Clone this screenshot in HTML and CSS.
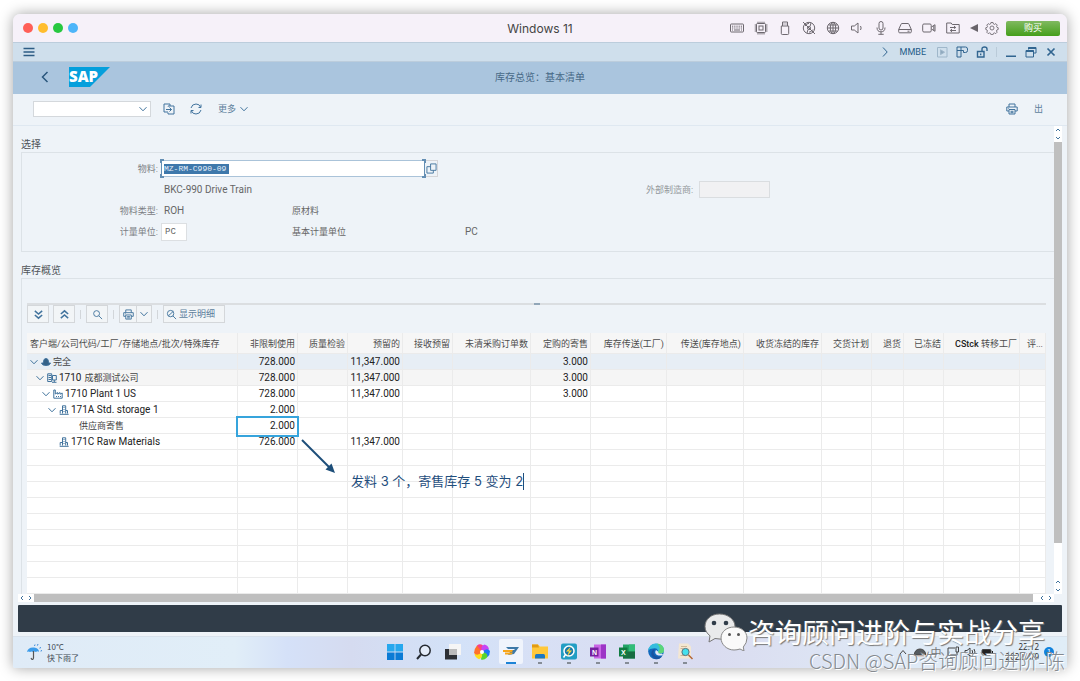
FILE: index.html
```html
<!DOCTYPE html>
<html lang="zh-CN">
<head>
<meta charset="utf-8">
<title>Windows 11</title>
<link rel="stylesheet" href="styles.css">
</head>
<body>
<svg class="defs" aria-hidden="true">
  <symbol id="chev" viewBox="0 0 8 8"><path d="M.5 2.200 4 5.800 7.500 2.200"/></symbol>
  <symbol id="company" viewBox="0 0 10 10"><path d="M.7 8.500V.8h4v7.700zM1.500 2.500h2.500M1.500 4.500h2.500M1.500 6.500h2.500M5.500 2.500h3.800v4.500h-3.800zM5 9.300h4.500M7.300 7v2"/></symbol>
  <symbol id="plant" viewBox="0 0 10 10"><path d="M.8 9.200V1h1.500v4l2.400-1.500v1.700l2.300-1.700v1.700l2.200-1.200v5.200zM3.500 7v1M5.500 7v1M7.500 7v1"/></symbol>
  <symbol id="store" viewBox="0 0 10 10"><path d="M3.500 8.500V.8h3.200v7.700M.7 9.300h9M1.200 8.500v-3h2M7 5.500h1.500v3M4.500 2.500h1M4.500 4.500h1M4.500 6.500h1"/></symbol>
  <symbol id="printer" viewBox="0 0 12 12"><path d="M3 4V1h6v3M3 8H.8V4h10.400v4H9M3 6.500h6V11H3zM4.500 8.300h3M4.500 9.700h3M2.300 5.300h.8"/></symbol>
</svg>
<div class="window">
  <header class="titlebar">
    <div class="dots"><i class="red"></i><i class="amber"></i><i class="green"></i><i class="blue"></i></div>
    <h1>Windows 11</h1>
    <div class="devices">
      <svg viewBox="0 0 16 16"><rect x="1.500" y="4" width="13" height="8" rx=".7"/><path d="M3 6.200h10M3 8h10" stroke-dasharray="1 .8"/><path d="M3 10h1M5 10h6M12 10h1"/></svg>
      <svg viewBox="0 0 16 16"><rect x="3.500" y="3.500" width="9" height="9" rx="1"/><rect x="6" y="6" width="4" height="4"/><path d="M5 1.700v2M7 1.700v2M9 1.700v2M11 1.700v2M5 12.500v2M7 12.500v2M9 12.500v2M11 12.500v2M1.700 5h2M1.700 7h2M1.700 9h2M1.700 11h2M12.500 5h2M12.500 7h2M12.500 9h2M12.500 11h2"/></svg>
      <svg viewBox="0 0 16 16"><path d="M5.500 6V2h5v4M4.300 6h7.400v7.500q0 1-1 1H5.300q-1 0-1-1zM7 3.500v1M9 3.500v1"/></svg>
      <svg viewBox="0 0 16 16"><circle cx="8" cy="8" r="5.700"/><circle cx="8" cy="8" r="1.500"/><path d="M2 2l12 12M4 6q1.500-2.500 4-2.700M12 9.500q-1.500 2.500-4 2.700M10 3l-1 3.500M6 13l1-3.500"/></svg>
      <svg viewBox="0 0 16 16"><circle cx="8" cy="8" r="5.700"/><ellipse cx="8" cy="8" rx="2.700" ry="5.700"/><path d="M2.300 8h11.400M3.500 5h9M3.500 11h9M8 2.300v11.400"/></svg>
      <svg viewBox="0 0 16 16"><path d="M2.500 6h2.800L9 3v10L5.300 10H2.500zM11.500 6q1.300 2 0 4"/></svg>
      <svg viewBox="0 0 16 16"><rect x="6" y="1.500" width="4" height="8.500" rx="2"/><path d="M4 7.500q0 4.300 4 4.300t4-4.300M8 12v2.300M5.300 14.300h5.400"/></svg>
      <svg viewBox="0 0 16 16"><path d="M1.700 9.500 4 4.300q.3-.8 1-.8h6q.7 0 1 .8l2.300 5.200v2.300q0 1-1 1H2.700q-1 0-1-1zM1.700 9.500h12.600M10.500 11.200h2"/></svg>
      <svg viewBox="0 0 16 16"><rect x="1.700" y="4" width="8.500" height="8" rx="1.200"/><path d="M10.500 7 14 4.700v6.600L10.500 9M12.800 5.500v5"/></svg>
      <svg viewBox="0 0 16 16"><path d="M1.700 13V3h4.500l1 1.500h7V13zM5 7.500h5.500M9 6l1.700 1.500L9 8.500M11 10.500H5.500M7 9l-1.700 1.500L7 12"/></svg>
    </div>
    <svg class="back-tri" viewBox="0 0 8 8"><path d="M8 0v8L0 4z"/></svg>
    <svg class="gear" viewBox="0 0 16 16"><circle cx="8" cy="8" r="2.300"/><path d="M6.800 1.700h2.400l.4 1.600 1.300.6 1.500-.9 1.600 1.700-.8 1.400.5 1.200 1.400.4v2l-1.500.5-.5 1.200.8 1.400-1.600 1.600-1.400-.8-1.300.5-.4 1.500H6.800l-.4-1.500-1.300-.5-1.500.8L2 12.800l.8-1.400-.5-1.200-1.400-.5v-2l1.500-.4.5-1.200L2 4.700 3.700 3l1.400.9 1.300-.6z"/></svg>
    <button class="buy">购买</button>
  </header>

  <nav class="menubar">
    <button class="bare" aria-label="菜单"><svg class="burger" viewBox="0 0 12 10"><path d="M.5 1.500h11M.5 5h11M.5 8.500h11"/></svg></button>
    <div class="menu-tools">
      <svg viewBox="0 0 12 12"><path d="M4 1.500 8.200 6 4 10.500"/></svg>
      <span class="tcode">MMBE</span>
      <svg class="dim" viewBox="0 0 12 12"><path d="M1.500 1.500h9.500v9.500H1.500z"/><path d="M4.500 3.800v4.800L8.500 6.200z" fill="#8fa9be"/></svg>
      <svg viewBox="0 0 12 12"><path d="M1 1h8.500q2 0 2 2v1.500q0 2-2 2H7.500v-2H5v6.500H1zM1 4.500h4V1"/></svg>
      <svg viewBox="0 0 12 12"><path d="M1.500 5.500h6.500v5.500H1.500zM6 5V3q0-2 2.500-2T11 3v2M4.700 7.500v1.700" stroke-width="1.400"/></svg>
      <span class="sep"></span>
      <svg viewBox="0 0 12 12"><path d="M1 10.300h10" stroke-width="1.500"/></svg>
      <svg viewBox="0 0 12 12"><path d="M3.500 3.500V1.500h7.500v5.500H9M1 4.500h7.500V11H1z"/><path d="M1 5h7.500M3.500 2h7.500" stroke-width="2"/></svg>
      <svg viewBox="0 0 12 12"><path d="m2.500 2.500 7 7m0-7-7 7" stroke-width="1.700"/></svg>
    </div>
  </nav>

  <div class="banner">
    <button class="bare" aria-label="返回"><svg class="back" viewBox="0 0 8 12"><path d="M6.500 1 1.500 6l5 5"/></svg></button>
    <svg class="logo" viewBox="0 0 41 20"><path d="M0 0h41L21 20H0z"/><text x="0" y="15">SAP</text></svg>
    <h2>库存总览：基本清单</h2>
  </div>

  <div class="toolbar">
    <div class="combo"><select aria-label="命令"><option></option></select><svg viewBox="0 0 8 8"><use href="#chev"/></svg></div>
    <button class="bare" aria-label="转到"><svg viewBox="0 0 12 12"><path d="M5 9H1V1h6v2M5 3.500V3h6v8H5V9.500M3 6.500h5.500M6.500 4.500l2 2-2 2"/></svg></button>
    <button class="bare refresh" aria-label="刷新"><svg viewBox="0 0 12 12"><path d="M1 5q1-4 5-4 3.500 0 4.500 3M11 7q-1 4-5 4-3.500 0-4.500-3M11 1.500v3H8.500M1 10.500v-3h2.500"/></svg></button>
    <button class="bare more">更多 <svg viewBox="0 0 8 8"><use href="#chev"/></svg></button>
    <button class="bare print" aria-label="打印"><svg viewBox="0 0 12 12"><use href="#printer"/></svg></button>
    <button class="bare exit">出</button>
  </div>

  <div class="workspace">
    <main>
      <h3>选择</h3>
      <form class="criteria">
        <label class="lab" for="mat">物料:</label>
        <div class="material"><div class="focus"><input id="mat" value="MZ-RM-C990-09"></div><button type="button" aria-label="搜索帮助"><svg viewBox="0 0 12 12"><path d="M5 1h6v7H5zM5 4H1v7h7V8"/></svg></button></div>
        <span class="c2 wide latin">BKC-990 Drive Train</span>
        <label class="faint" for="ext">外部制造商:</label><input id="ext" class="ext" disabled>
        <span class="lab">物料类型:</span><span class="c2 latin">ROH</span><span class="c3">原材料</span>
        <label class="lab" for="unit">计量单位:</label><input id="unit" class="unit" value="PC"><span class="c3">基本计量单位</span><span class="c4 latin">PC</span>
      </form>
      <h3>库存概览</h3>
      <section class="overview">
        <div class="splitter"></div>
        <div class="gridtools">
          <button aria-label="展开"><svg class="heavy" viewBox="0 0 12 12"><path d="m2 2 4 3.500L10 2M2 6.500 6 10l4-3.500"/></svg></button>
          <button aria-label="折叠"><svg class="heavy" viewBox="0 0 12 12"><path d="m2 5.500 4-3.500 4 3.500M2 10l4-3.500 4 3.500"/></svg></button>
          <i></i>
          <button aria-label="查找"><svg viewBox="0 0 12 12"><circle cx="5" cy="5" r="3.200"/><path d="m7.500 7.500 3.500 3.500"/></svg></button>
          <i></i>
          <span class="split"><button aria-label="打印"><svg viewBox="0 0 12 12"><use href="#printer"/></svg></button><button aria-label="打印选项"><svg class="tiny" viewBox="0 0 8 8"><use href="#chev"/></svg></button></span>
          <i></i>
          <button class="detail"><svg viewBox="0 0 12 12"><circle cx="5" cy="5" r="3.500"/><path d="m7.500 7.500 3.500 3.500M2.500 7.500 8 2.500"/></svg>显示明细</button>
        </div>
        <table>
          <colgroup><col><col class="w60"><col class="w50"><col class="w55"><col class="w50"><col class="w78"><col class="w60"><col class="w76"><col class="w77"><col class="w78"><col class="w50"><col class="w32"><col class="w40"><col class="w76"><col class="w26"></colgroup>
          <thead><tr><th>客户端/公司代码/工厂/存储地点/批次/特殊库存</th><th>非限制使用</th><th>质量检验</th><th>预留的</th><th>接收预留</th><th>未清采购订单数</th><th>定购的寄售</th><th>库存传送(工厂)</th><th>传送(库存地点)</th><th>收货冻结的库存</th><th>交货计划</th><th>退货</th><th>已冻结</th><th><b>CStck</b> 转移工厂</th><th>评...</th></tr></thead>
          <tbody>
            <tr class="total"><td><div class="node"><svg><use href="#chev"/></svg><svg class="ic" viewBox="0 0 10 10"><path d="M2.500 5q0-3.500 2.500-3.500T7.500 5v1h2Q9 8.500 5 8.500T.5 6h2z" fill="#346187"/></svg><span class="zh">完全</span></div></td><td>728.000</td><td></td><td>11,347.000</td><td></td><td></td><td>3.000</td><td></td><td></td><td></td><td></td><td></td><td></td><td></td><td></td></tr>
            <tr class="sub"><td><div class="node l1"><svg><use href="#chev"/></svg><svg class="ic"><use href="#company"/></svg>1710 <span class="zh gap">成都测试公司</span></div></td><td>728.000</td><td></td><td>11,347.000</td><td></td><td></td><td>3.000</td><td></td><td></td><td></td><td></td><td></td><td></td><td></td><td></td></tr>
            <tr><td><div class="node l2"><svg><use href="#chev"/></svg><svg class="ic"><use href="#plant"/></svg>1710 Plant 1 US</div></td><td>728.000</td><td></td><td>11,347.000</td><td></td><td></td><td>3.000</td><td></td><td></td><td></td><td></td><td></td><td></td><td></td><td></td></tr>
            <tr><td><div class="node l3"><svg><use href="#chev"/></svg><svg class="ic"><use href="#store"/></svg>171A Std. storage 1</div></td><td>2.000</td><td></td><td></td><td></td><td></td><td></td><td></td><td></td><td></td><td></td><td></td><td></td><td></td><td></td></tr>
            <tr><td><div class="node leaf"><span class="zh">供应商寄售</span></div></td><td class="marked">2.000<svg class="arrow" viewBox="0 0 38 38"><path d="M2 2 29 29" stroke="#1d4e79" stroke-width="2"/><path d="M35 35 25.500 31.500 31.500 25.500z" fill="#1d4e79"/></svg><span class="note">发料 3 个，寄售库存 5 变为 2</span></td><td></td><td></td><td></td><td></td><td></td><td></td><td></td><td></td><td></td><td></td><td></td><td></td><td></td></tr>
            <tr><td><div class="node l3"><svg></svg><svg class="ic"><use href="#store"/></svg>171C Raw Materials</div></td><td>726.000</td><td></td><td>11,347.000</td><td></td><td></td><td></td><td></td><td></td><td></td><td></td><td></td><td></td><td></td><td></td></tr>
            <tr><td></td><td></td><td></td><td></td><td></td><td></td><td></td><td></td><td></td><td></td><td></td><td></td><td></td><td></td><td></td></tr>
            <tr><td></td><td></td><td></td><td></td><td></td><td></td><td></td><td></td><td></td><td></td><td></td><td></td><td></td><td></td><td></td></tr>
            <tr><td></td><td></td><td></td><td></td><td></td><td></td><td></td><td></td><td></td><td></td><td></td><td></td><td></td><td></td><td></td></tr>
            <tr><td></td><td></td><td></td><td></td><td></td><td></td><td></td><td></td><td></td><td></td><td></td><td></td><td></td><td></td><td></td></tr>
            <tr><td></td><td></td><td></td><td></td><td></td><td></td><td></td><td></td><td></td><td></td><td></td><td></td><td></td><td></td><td></td></tr>
            <tr><td></td><td></td><td></td><td></td><td></td><td></td><td></td><td></td><td></td><td></td><td></td><td></td><td></td><td></td><td></td></tr>
            <tr><td></td><td></td><td></td><td></td><td></td><td></td><td></td><td></td><td></td><td></td><td></td><td></td><td></td><td></td><td></td></tr>
            <tr><td></td><td></td><td></td><td></td><td></td><td></td><td></td><td></td><td></td><td></td><td></td><td></td><td></td><td></td><td></td></tr>
            <tr><td></td><td></td><td></td><td></td><td></td><td></td><td></td><td></td><td></td><td></td><td></td><td></td><td></td><td></td><td></td></tr>
          </tbody>
        </table>
      </section>
      <div class="hbar"><svg viewBox="0 0 16 8"><path d="M5 2 3 4l2 2M11 2l2 2-2 2"/></svg><div class="thumb"></div><svg viewBox="0 0 16 8"><path d="M5 2 3 4l2 2M11 2l2 2-2 2"/></svg></div>
    </main>
    <div class="vbar"><svg viewBox="0 0 8 16"><path d="m2 5 2-2 2 2M2 11l2 2 2-2"/></svg><div class="thumb"></div><svg viewBox="0 0 8 16"><path d="m2 5 2-2 2 2M2 11l2 2 2-2"/></svg></div>
  </div>
  <div class="status"></div>

  <footer class="taskbar">
    <div class="weather">
      <svg viewBox="0 0 16 18"><path d="M1 9Q2 4 8 4.500q5 .5 5 4.500-1.500-1.300-3 0-1.500-1-3 0-1.500-1-3 0-1.500-1-3 0z" fill="#3c9cea"/><path d="M7.500 8v7q-.3 1.700-1.800 1.200L5 15" fill="none" stroke="#555" stroke-width="1.200"/><path d="M9 1.500 8.500 3M12 1l-.6 1.600M14.500 4l-.6 1.600M15.500 7l-.5 1.500" stroke="#3b89d8"/></svg>
      <div><p>10°C</p><p>快下雨了</p></div>
    </div>
    <div class="apps">
      <svg viewBox="0 0 16 16"><path d="M0 0h7.600v7.600H0zM8.400 0H16v7.600H8.400z" fill="#27a8ee"/><path d="M0 8.400h7.600V16H0zM8.400 8.400H16V16H8.400z" fill="#0b7bd5"/></svg>
      <svg viewBox="0 0 16 16"><circle cx="9" cy="6.500" r="5.200" fill="#e4ecf9" stroke="#252a31" stroke-width="1.500"/><path d="m5 10.500-4 4.500" stroke="#252a31" stroke-width="2"/></svg>
      <svg viewBox="0 0 16 16"><path d="M4 0h12v11H4z" fill="#f5f5f5"/><path d="M0 5h12v10.500H0z" fill="#2d3035"/><path d="M4 5h8v6H4z" fill="#bbb"/></svg>
      <svg viewBox="0 0 16 16"><path d="M8 8Q2 7 3 1.500 6-1 9 1.500z" fill="#fa3e89"/><path d="M8 8Q6 2 10.500.5q4 1 4.500 5z" fill="#c644f5"/><path d="M8 8q5-5 8-1 0 4-2.500 6z" fill="#1d78f4"/><path d="M8 8q7 1 5 5.500Q10 16.500 7 15.500z" fill="#58d52d"/><path d="M8 8q1 6-3 7.200Q1 13.500.5 10z" fill="#ffdf1a"/><path d="M8 8q-5 5-8 1 0-4 3-7.500z" fill="#ff722c"/><circle cx="8" cy="8" r="2" fill="#fff"/></svg>
      <div class="active"><svg viewBox="0 0 16 16"><path d="M3 4h13l-5 7-6 1 2-3H2l1-2h8l1-1H5z" fill="#3e79a8"/><path d="M0 7h10l-1 2H0zM2 9.500h8L8.500 11.500H2z" fill="#f7a51a"/></svg></div>
      <svg class="run" viewBox="0 0 16 16"><path d="M0 1h6l2 2h8v12H0z" fill="#ffc83a"/><path d="M0 1h6l1 3H0z" fill="#e29b14"/><path d="M3 15v-3q0-1.500 1.500-1.500h7Q13 10.500 13 12v3z" fill="#1b78c4"/></svg>
      <svg class="run" viewBox="0 0 16 16"><rect width="16" height="16" rx="2" fill="#239ec4"/><circle cx="8" cy="7.500" r="5" fill="#197bab" stroke="#fff" stroke-width="1.500"/><path d="m10 3-5 5h3l-2 5 5-6H8z" fill="#ffd53b"/><path d="m4.500 11-2 3" stroke="#fff" stroke-width="1.500"/></svg>
      <svg class="run" viewBox="0 0 16 16"><path d="M4 1h12v14H4z" fill="#c965e5"/><path d="M11 1h5v14h-5z" fill="#9c35c6"/><path d="M0 4h8.500v9H0z" fill="#7620a0"/><text x="2" y="11">N</text></svg>
      <svg class="run" viewBox="0 0 16 16"><path d="M4 1h12v14H4z" fill="#23a366"/><path d="M10 1h6v7h-6z" fill="#32bd78"/><path d="M4 8h12v7H4z" fill="#176c42"/><path d="M0 4h8.500v9H0z" fill="#107c41"/><text x="2" y="11">X</text></svg>
      <svg class="run" viewBox="0 0 16 16"><circle cx="8" cy="8" r="7.800" fill="#1269bd"/><path d="M0 7Q2-1 9 0q7 1 7 7 0 3-4 3-3 0-2-3-1-3-5-2-3 0-5 2z" fill="#35bddd"/><path d="M9 0q7 1 7 7 0 3-4 3-2 0-2-1.500Q14 5 9 0z" fill="#5cd678"/><path d="M7 6q-3 3 0 6 3 2 7 1-3 4-8 2Q1 11 5 6z" fill="#1853a0"/><path d="M8 6.500q-2 3 1 5 3 1 6 0l-1-1.500q-4 1-4-2z" fill="#e1eaf8"/></svg>
      <svg class="run" viewBox="0 0 16 16"><path d="M2 0h9l3 3v12H1z" fill="#f4e7d2"/><path d="M4 3h6M3.500 5h3M3.500 12h5" stroke="#cfb999"/><circle cx="8.500" cy="8.500" r="3.600" fill="#45e0ed" stroke="#59717a"/><path d="m11.500 11.500 4 4" stroke="#b26432" stroke-width="1.500"/></svg>
    </div>
    <div class="tray">
      <svg viewBox="0 0 12 12"><path d="m3 8 3-3.500L9 8"/></svg>
      <svg viewBox="0 0 12 12"><path d="M0 9q1-6 6-6t6 6z" fill="#555b60"/><path d="M2 10h8" stroke="#d8b8a8"/></svg>
      <span class="ime">中</span>
      <svg viewBox="0 0 12 12"><path d="M8 2H1v7h8M3 11h5M9 1h2.500v5H9zM10 6v3"/></svg>
      <svg viewBox="0 0 12 12"><path d="M1 4.500h2L6 2v8L3 7.500H1zM8 4q1.300 2 0 4M10 3q2 3 0 6"/></svg>
      <svg viewBox="0 0 12 12"><rect x="1" y="3.500" width="9" height="5.500" rx="1" fill="#222"/><path d="M11.500 5v2.500" stroke="#222"/></svg>
      <div class="clock"><p>22:12</p><p>2022/4/9</p></div>
      <span class="badge">1</span>
    </div>
  </footer>
</div>
<div class="mark-wechat">
  <svg viewBox="0 0 44 38"><path d="M15.500 1C7 1 1 6.500 1 13.500c0 4 2 7 5 9.300L5 29l6-3.500q6 1.500 11-.5 9-3 9-11.500C31 6.500 24 1 15.500 1z" fill="#e9eaeb" stroke="#777"/><circle cx="10" cy="10" r="2.300" fill="#303c49"/><circle cx="22" cy="10" r="2.300" fill="#303c49"/><path d="M30 14c-7 0-13 4.500-13 11s6 12 13 12q3 0 6-1l4 2-.7-4Q43 30 43 25c0-6.500-6-11-13-11z" fill="#fafafa" stroke="#888"/><circle cx="25.500" cy="21.500" r="1.500" fill="#555"/><circle cx="34.500" cy="21.500" r="1.500" fill="#555"/></svg>
  <span>咨询顾问进阶与实战分享</span>
</div>
<div class="mark-csdn">CSDN @SAP咨询顾问进阶-陈</div>
</body>
</html>
```
FILE: styles.css
```css
* { box-sizing: border-box; }
body, h1, h2, h3, p { margin: 0; font-weight: 400; }
body {
  position: relative;
  min-height: 100vh;
  padding: 14px 13px 13px;
  background: #fff;
  color: #666;
  font: 9px/16px Roboto, "Noto Sans CJK SC", sans-serif;
}
svg { display: block; flex: none; fill: none; stroke: #41739d; }
.defs { position: absolute; width: 0; height: 0; }
button, input, select { margin: 0; padding: 0; border: 0; border-radius: 0; font: inherit; color: inherit; }
button { background: none; display: flex; align-items: center; justify-content: center; }

.window { border-radius: 7px 7px 2px 2px; background: #eef3f8; box-shadow: 0 0 14px rgba(0,0,0,.36); overflow: hidden; }

.titlebar { position: relative; display: flex; align-items: center; height: 28px; padding: 0 7px 0 10px; background: #f6f1f9; }
.dots { display: flex; gap: 5px; flex: 1; }
.dots i { width: 10px; height: 10px; border-radius: 50%; }
.red { background: #ff5f57; }
.amber { background: #ffbd2e; }
.green { background: #28c840; }
.blue { background: #4db5f9; }
.titlebar h1 { position: absolute; left: 0; right: 0; text-align: center; font: 12px/28px "Inter", sans-serif; color: #444; padding-top: 2px; pointer-events: none; }
.devices { display: flex; gap: 8px; margin-right: 9px; }
.titlebar svg { stroke: #6d686f; stroke-width: 1; width: 16px; height: 16px; }
.titlebar .back-tri { width: 8px; height: 8px; fill: #69646b; stroke: none; }
.titlebar .gear { margin: 0 7px; width: 14px; height: 14px; }
.buy { width: 54px; height: 15px; border-radius: 2px; color: #fff; background: linear-gradient(#80b960, #459f1b); }

.menubar { display: flex; align-items: center; justify-content: space-between; height: 20px; padding: 0 10px 1px; background: #cfdfec; border: solid #bccddc; border-width: 1px 0; }
.burger { width: 12px; height: 10px; stroke: #2d5c84; stroke-width: 1.3; }
.menu-tools { display: flex; align-items: center; gap: 8px; color: #245b88; }
.menu-tools svg { width: 12px; height: 12px; stroke: #316590; }
.tcode { margin: 0 2px 0 1px; }
.menu-tools .dim { stroke: #9fb7ca; }
.sep { width: 1px; height: 10px; background: #bacbd9; }
.banner { position: relative; display: flex; align-items: center; gap: 20px; height: 32px; padding: 0 0 2px 28px; background: #aac5de; }
.back { width: 8px; height: 12px; stroke: #2a577d; stroke-width: 1.5; }
.logo { width: 41px; height: 20px; stroke: none; }
.logo path { fill: #049fdc; }
.logo text { fill: #fff; font: 800 15px "Open Sans", sans-serif; }
.banner h2 { position: absolute; left: 0; right: 0; text-align: center; font: 10px/32px "Noto Sans CJK SC", sans-serif; color: #476987; }

.toolbar { display: flex; align-items: center; height: 32px; padding: 0 24px 2px 20px; border-bottom: 1px solid #dfe8f1; color: #5d7f9c; }
.toolbar svg { width: 12px; height: 12px; }
.combo { position: relative; width: 118px; height: 16px; margin-right: 12px; }
.combo select { appearance: none; display: block; width: 100%; height: 100%; background: #fff; border: 1px solid #d4d8dc; }
.combo svg { position: absolute; right: 4px; top: 4px; width: 8px; height: 8px; }
.refresh { margin: 0 16px 0 15px; }
.more svg { width: 8px; height: 8px; margin-left: 4px; }
.print { margin: 0 16px 0 auto; }

.workspace { display: flex; padding: 0 5px; }
main { flex: 1; min-width: 0; }
h3 { padding: 11px 0 0 3px; font-size: 10px; line-height: 15px; color: #4f5358; }
.criteria {
  display: grid;
  grid-template-columns: 136px 134px 173px 181px 53px 70px 1fr;
  grid-auto-rows: 21px;
  align-items: center;
  height: 100px;
  margin-left: 3px;
  padding-top: 5px;
  border: 1px solid #dce2e7;
  border-right: 0;
}
.lab { grid-column: 1; text-align: right; color: #7c8085; }
.c2 { grid-column: 2; padding-left: 6px; }
.c2.wide { grid-column: 2 / 4; }
.c3 { grid-column: 3; }
.c4 { grid-column: 4; }
.latin { font-size: 10px; }
.faint { grid-column: 5; color: #93979b; }
.material { grid-column: 2 / 7; display: flex; align-items: center; padding-left: 3px; }
.focus { position: relative; display: flex; align-items: center; width: 264px; height: 17px; padding-left: 2px; background: #fff; border: 1px solid #aac3d9; }
.focus::before { content: ""; position: absolute; inset: -2px; border: 2px solid #648fb4; clip-path: polygon(0 0, 4px 0, 4px 100%, 0 100%, 0 calc(100% - 4px), 1px calc(100% - 4px), 1px 4px, 0 4px, 0 0, calc(100% - 4px) 0, 100% 0, 100% 4px, calc(100% - 1px) 4px, calc(100% - 1px) calc(100% - 4px), 100% calc(100% - 4px), 100% 100%, calc(100% - 4px) 100%, calc(100% - 4px) 0); pointer-events: none; }
.focus input { width: 65px; height: 10px; background: #3e78ab; color: #e4effa; font: 8px/10px "Liberation Mono", monospace; }
.material button { width: 13px; height: 17px; border: 1px solid #d5d5d8; border-left: 0; }
.material svg { width: 11px; height: 11px; }
.ext { grid-column: 6; width: 71px; height: 17px; background: #f1f1f3; border: 1px solid #dadde0; }
.unit { grid-column: 2; width: 26px; height: 18px; margin-left: 3px; padding-left: 3px; background: #fff; border: 1px solid #dcdfe2; font: 9px/16px "Liberation Mono", monospace; }

.overview { margin-left: 3px; padding: 24px 8px 0 5px; border: solid #dce2e7; border-width: 1px 0 0 1px; }
.splitter { height: 2px; background: #dbdee1; }
.splitter::after { content: ""; display: block; width: 6px; height: 2px; margin: 0 auto; background: #91a6b8; }
.gridtools { display: flex; align-items: center; gap: 4px; height: 18px; margin-bottom: 10px; }
.gridtools button { width: 22px; height: 18px; border: 1px solid #d4d7da; background: #f2f5f7; color: #5c7e9c; }
.gridtools i { width: 1px; height: 9px; margin: 0 1px; background: #d2d6da; }
.gridtools svg { width: 11px; height: 11px; }
.gridtools .heavy { stroke-width: 1.6; }
.split { display: flex; }
.gridtools .split button { width: 18px; }
.gridtools .split button + button { width: 15px; border-left: 0; }
.gridtools .tiny { width: 8px; height: 8px; }
.gridtools .detail { width: 62px; gap: 2px; justify-content: flex-start; padding-left: 2px; white-space: nowrap; }

table { width: 100%; table-layout: fixed; border-collapse: separate; border-spacing: 0; background: #fff; }
.w26 { width: 26px; } .w32 { width: 32px; } .w40 { width: 40px; } .w50 { width: 50px; } .w55 { width: 55px; }
.w60 { width: 60px; } .w76 { width: 76px; } .w77 { width: 77px; } .w78 { width: 78px; }
th, td { height: 16px; padding: 1px 2px 0 0; line-height: 14px; text-align: right; white-space: nowrap; font-weight: 400; border: solid #ebebeb; border-width: 0 1px 1px 0; color: #222; }
td { font-size: 10px; }
th { height: 21px; background: #f6f6f6; color: #4d4d4d; }
th b { font-weight: 500; color: #222; }
th:first-child { text-align: left; padding-left: 3px; }
.total td { background: #e7eef5; }
.sub td { background: #f5f5f5; }
.node { display: flex; align-items: center; height: 14px; padding-left: 3px; }
.node svg { width: 8px; height: 8px; margin-right: 3px; }
.node .ic { width: 10px; height: 10px; margin-right: 2px; }
.zh { font-size: 9px; color: #444; }
.zh.gap { margin-left: 3px; }
.l1 { padding-left: 9px; } .l2 { padding-left: 15px; } .l3 { padding-left: 21px; }
.leaf { padding-left: 52px; }
.marked { position: relative; }
.marked::before { content: ""; position: absolute; inset: -2px -2px -4px -2px; border: 2px solid #36a4dc; }
.arrow { position: absolute; left: 62px; top: 20px; width: 38px; height: 38px; stroke: none; }
.note { position: absolute; left: 113px; top: 55px; border-right: 1px solid #1f4e7d; font: 13px/17px "Inter", "Noto Sans CJK SC", sans-serif; color: #1f4e7d; }

.hbar { display: flex; height: 8px; background: #fff; }
.hbar svg { width: 16px; height: 8px; }
.hbar .thumb { flex: 1; margin-right: 5px; background: #bfbfbf; }
.vbar { display: flex; flex-direction: column; width: 8px; margin-bottom: 8px; background: #fff; }
.vbar svg { width: 8px; height: 16px; }
.vbar .thumb { flex: 1; background: #bfbfbf; margin-bottom: 35px; }
.status { height: 27px; margin: 3px 5px 4px; border-radius: 1px; background: #303c48; }

.taskbar { position: relative; display: flex; align-items: center; justify-content: space-between; height: 32px; padding: 0 13px 2px; background: linear-gradient(90deg, #dfebf7 0, #e1eef8 21%, #d5e1f8 26%, #d5dbf0 32%, #d3e2f8 42%, #d8e0f5 50%, #dadcf0 66%, #dfeaf6 85%, #e0edf7 100%); border-top: 1px solid #d9e2ec; }
.weather { display: flex; align-items: center; gap: 5px; font: 8px/11px "Noto Sans CJK SC", sans-serif; color: #3f4b55; }
.weather svg { width: 16px; height: 18px; stroke: none; }
.apps { position: absolute; left: 0; right: 0; top: 0; height: 100%; padding-bottom: 2px; display: flex; align-items: center; justify-content: center; gap: 13px; }
.apps svg { width: 16px; height: 16px; stroke: none; overflow: visible; }
.apps text { font: 700 7px "Liberation Sans", sans-serif; fill: #fff; }
.active { margin: 0 -4px; width: 24px; height: 25px; padding: 4px; border-radius: 2px; background: linear-gradient(#1d83d6, #1d83d6) 50% 100% / 10px 2px no-repeat #f0f4fc; }
.apps .run { background: linear-gradient(#858c96, #858c96) 50% 100% / 4px 2px no-repeat; height: 25px; }
.tray { display: flex; align-items: center; gap: 5px; }
.tray svg { width: 12px; height: 12px; stroke: #444; }
.ime { font: 11px/16px "Noto Sans CJK SC", sans-serif; color: #777; }
.clock { font: 8px/10px "Noto Sans", sans-serif; text-align: right; color: #333; margin-left: 8px; }
.badge { width: 10px; height: 10px; border-radius: 50%; background: #1182dc; color: #fff; font-size: 7px; line-height: 10px; text-align: center; }

.mark-wechat { position: absolute; right: 35px; bottom: 30px; display: flex; align-items: center; font: 27px/36px "Noto Sans CJK SC", sans-serif; color: #fff; text-shadow: 1px 1px 1px #777; }
.mark-wechat svg { width: 44px; height: 38px; stroke: none; }
.mark-csdn { position: absolute; right: 15px; bottom: 8px; font: 300 20px/24px "Noto Sans CJK SC", sans-serif; color: #858a90; text-shadow: 1px 1px 0 #fff; }
```
